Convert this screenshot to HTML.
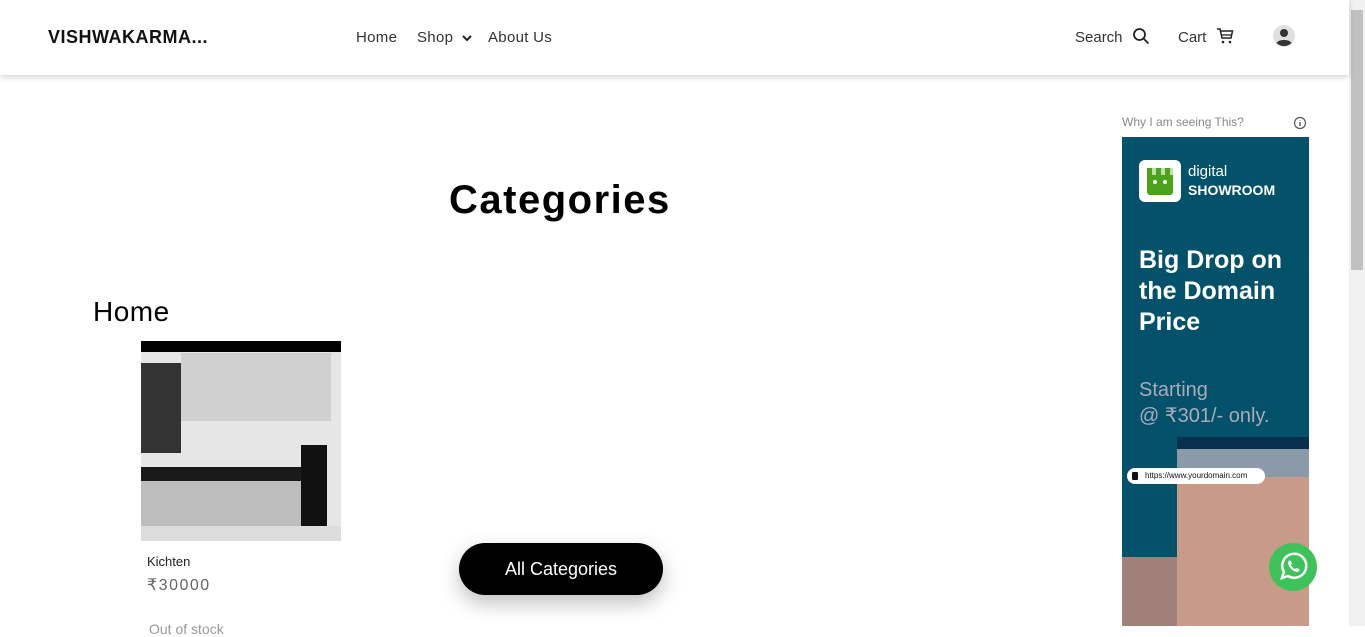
<!DOCTYPE html>
<html><head><meta charset="utf-8"><style>
*{margin:0;padding:0;box-sizing:border-box}
body{width:1365px;height:626px;overflow:hidden;background:#fff;font-family:"Liberation Sans",sans-serif;position:relative;color:#222}
.hdr{position:absolute;left:0;top:0;width:1349px;height:75px;background:#fff;box-shadow:0 2px 6px rgba(0,0,0,.18);z-index:2}
.abs{position:absolute}
.sb{position:absolute;right:0;top:0;width:16px;height:626px;background:#f1f1f1}
.thumb{position:absolute;right:2px;top:10px;width:12px;height:260px;background:#c1c1c1}
</style></head><body>
<div class="hdr">
<div class="abs" style="left:48px;top:27px;font-size:18px;font-weight:bold;letter-spacing:.5px;color:#111">VISHWAKARMA...</div>
<div class="abs" style="left:356px;top:29px;font-size:15px;color:#333;letter-spacing:.3px">Home</div>
<div class="abs" style="left:417px;top:29px;font-size:15px;color:#333;letter-spacing:.3px">Shop</div>
<svg class="abs" style="left:461px;top:33px" width="12" height="10" viewBox="0 0 12 10"><path d="M2 3l4 4 4-4" stroke="#222" stroke-width="2" fill="none"/></svg>
<div class="abs" style="left:488px;top:29px;font-size:15px;color:#333;letter-spacing:.3px">About Us</div>
<div class="abs" style="left:1075px;top:29px;font-size:15px;color:#333">Search</div>
<svg class="abs" style="left:1132px;top:27px" width="18" height="18" viewBox="0 0 18 18"><circle cx="7.5" cy="7.5" r="5.5" stroke="#222" stroke-width="1.8" fill="none"/><path d="M11.5 11.5l5 5" stroke="#222" stroke-width="1.8"/></svg>
<div class="abs" style="left:1178px;top:29px;font-size:15px;color:#333">Cart</div>
<svg class="abs" style="left:1216px;top:27px" width="18" height="18" viewBox="0 0 18 18"><path d="M1 2h3l2 9h9l1.5-7H5" stroke="#222" stroke-width="1.5" fill="none"/><path d="M6 8h10" stroke="#222" stroke-width="1.3"/><circle cx="7" cy="15" r="1.3" fill="#222"/><circle cx="14" cy="15" r="1.3" fill="#222"/></svg>
<svg class="abs" style="left:1273px;top:25px" width="22" height="22" viewBox="0 0 22 22"><circle cx="11" cy="11" r="11" fill="#e0e0e0"/><circle cx="11" cy="8" r="4" fill="#333"/><path d="M3.5 18c2-4 13-4 15 0a11 11 0 0 1-15 0z" fill="#333"/></svg>
</div>
<div class="abs" style="left:449px;top:178px;font-size:40px;font-weight:bold;color:#000;letter-spacing:1.5px">Categories</div>
<div class="abs" style="left:93px;top:296px;font-size:28px;color:#000;letter-spacing:.5px">Home</div>
<div class="abs" style="left:141px;top:341px;width:200px;height:200px;background:#e6e6e6;overflow:hidden">
<div class="abs" style="left:0;top:0;width:200px;height:11px;background:#000"></div>
<div class="abs" style="left:0;top:22px;width:40px;height:90px;background:#333"></div>
<div class="abs" style="left:40px;top:12px;width:150px;height:68px;background:#d0d0d0"></div>
<div class="abs" style="left:0;top:126px;width:175px;height:22px;background:#1a1a1a"></div>
<div class="abs" style="left:0;top:140px;width:175px;height:60px;background:#bdbdbd"></div>
<div class="abs" style="left:160px;top:104px;width:26px;height:96px;background:#111"></div>
<div class="abs" style="left:0;top:185px;width:200px;height:15px;background:#ddd"></div>
</div>
<div class="abs" style="left:147px;top:554px;font-size:13px;color:#222">Kichten</div>
<div class="abs" style="left:147px;top:575px;font-size:16px;color:#666;letter-spacing:1.5px">₹30000</div>
<div class="abs" style="left:149px;top:621px;font-size:14px;color:#999">Out of stock</div>
<div class="abs" style="left:459px;top:543px;width:204px;height:52px;border-radius:26px;background:#000;color:#fff;font-size:18px;text-align:center;line-height:52px;box-shadow:0 8px 20px rgba(0,0,0,.25)">All Categories</div>
<div class="abs" style="left:1122px;top:115px;font-size:12px;color:#888">Why I am seeing This?</div>
<svg class="abs" style="left:1293px;top:116px" width="14" height="14" viewBox="0 0 14 14"><circle cx="7" cy="7" r="5.5" stroke="#555" stroke-width="1.2" fill="none"/><path d="M7 6v4M7 4v.5" stroke="#555" stroke-width="1.4"/></svg>
<div class="abs" style="left:1122px;top:137px;width:187px;height:489px;background:#04516a;overflow:hidden">
<div class="abs" style="left:17px;top:23px;width:42px;height:42px;border-radius:6px;background:#fff"><div style="margin:8px 8px;width:26px;height:27px;background:#4ba21b;border-radius:3px;position:relative"><div style="position:absolute;left:0;top:0;width:26px;height:7px;background:repeating-linear-gradient(90deg,#4ba21b 0 5px,#bde0a8 5px 9px)"></div><div style="position:absolute;left:6px;top:12px;width:4px;height:4px;border-radius:2px;background:#fff"></div><div style="position:absolute;left:16px;top:12px;width:4px;height:4px;border-radius:2px;background:#fff"></div></div></div>
<div class="abs" style="left:66px;top:26px;font-size:15px;color:#fff">digital</div>
<div class="abs" style="left:66px;top:45px;font-size:14px;font-weight:bold;color:#fff">SHOWROOM</div>
<div class="abs" style="left:17px;top:108px;font-size:25px;font-weight:bold;color:#fff;line-height:31px">Big Drop on<br>the Domain<br>Price</div>
<div class="abs" style="left:17px;top:240px;font-size:20px;color:#aab;line-height:26px">Starting<br>@ ₹301/- only.</div>
<div class="abs" style="left:55px;top:300px;width:132px;height:189px;background:linear-gradient(#0a3050 0 12px,#8a9aa8 12px 40px,#c89a88 40px)"></div>
<div class="abs" style="left:5px;top:331px;width:138px;height:16px;border-radius:8px;background:#fff;font-size:8px;color:#111;line-height:16px;padding-left:18px">https://www.yourdomain.com</div>
<div class="abs" style="left:10px;top:335px;width:6px;height:8px;background:#111;border-radius:1px"></div>
<div class="abs" style="left:0;top:420px;width:55px;height:69px;background:#a08078"></div>
</div>
<svg class="abs" style="left:1269px;top:543px" width="48" height="48" viewBox="0 0 48 48"><circle cx="24" cy="24" r="24" fill="#3ec35a"/><path d="M13 35l2-6a12 12 0 1 1 4 4z" stroke="#fff" stroke-width="2.5" fill="none"/><path d="M19 19c0 5 5 10 10 10l2-2-3-2-2 1c-2-1-3-2-4-4l1-2-2-3z" fill="#fff"/></svg>
<div class="sb"><div class="thumb"></div></div>
</body></html>
